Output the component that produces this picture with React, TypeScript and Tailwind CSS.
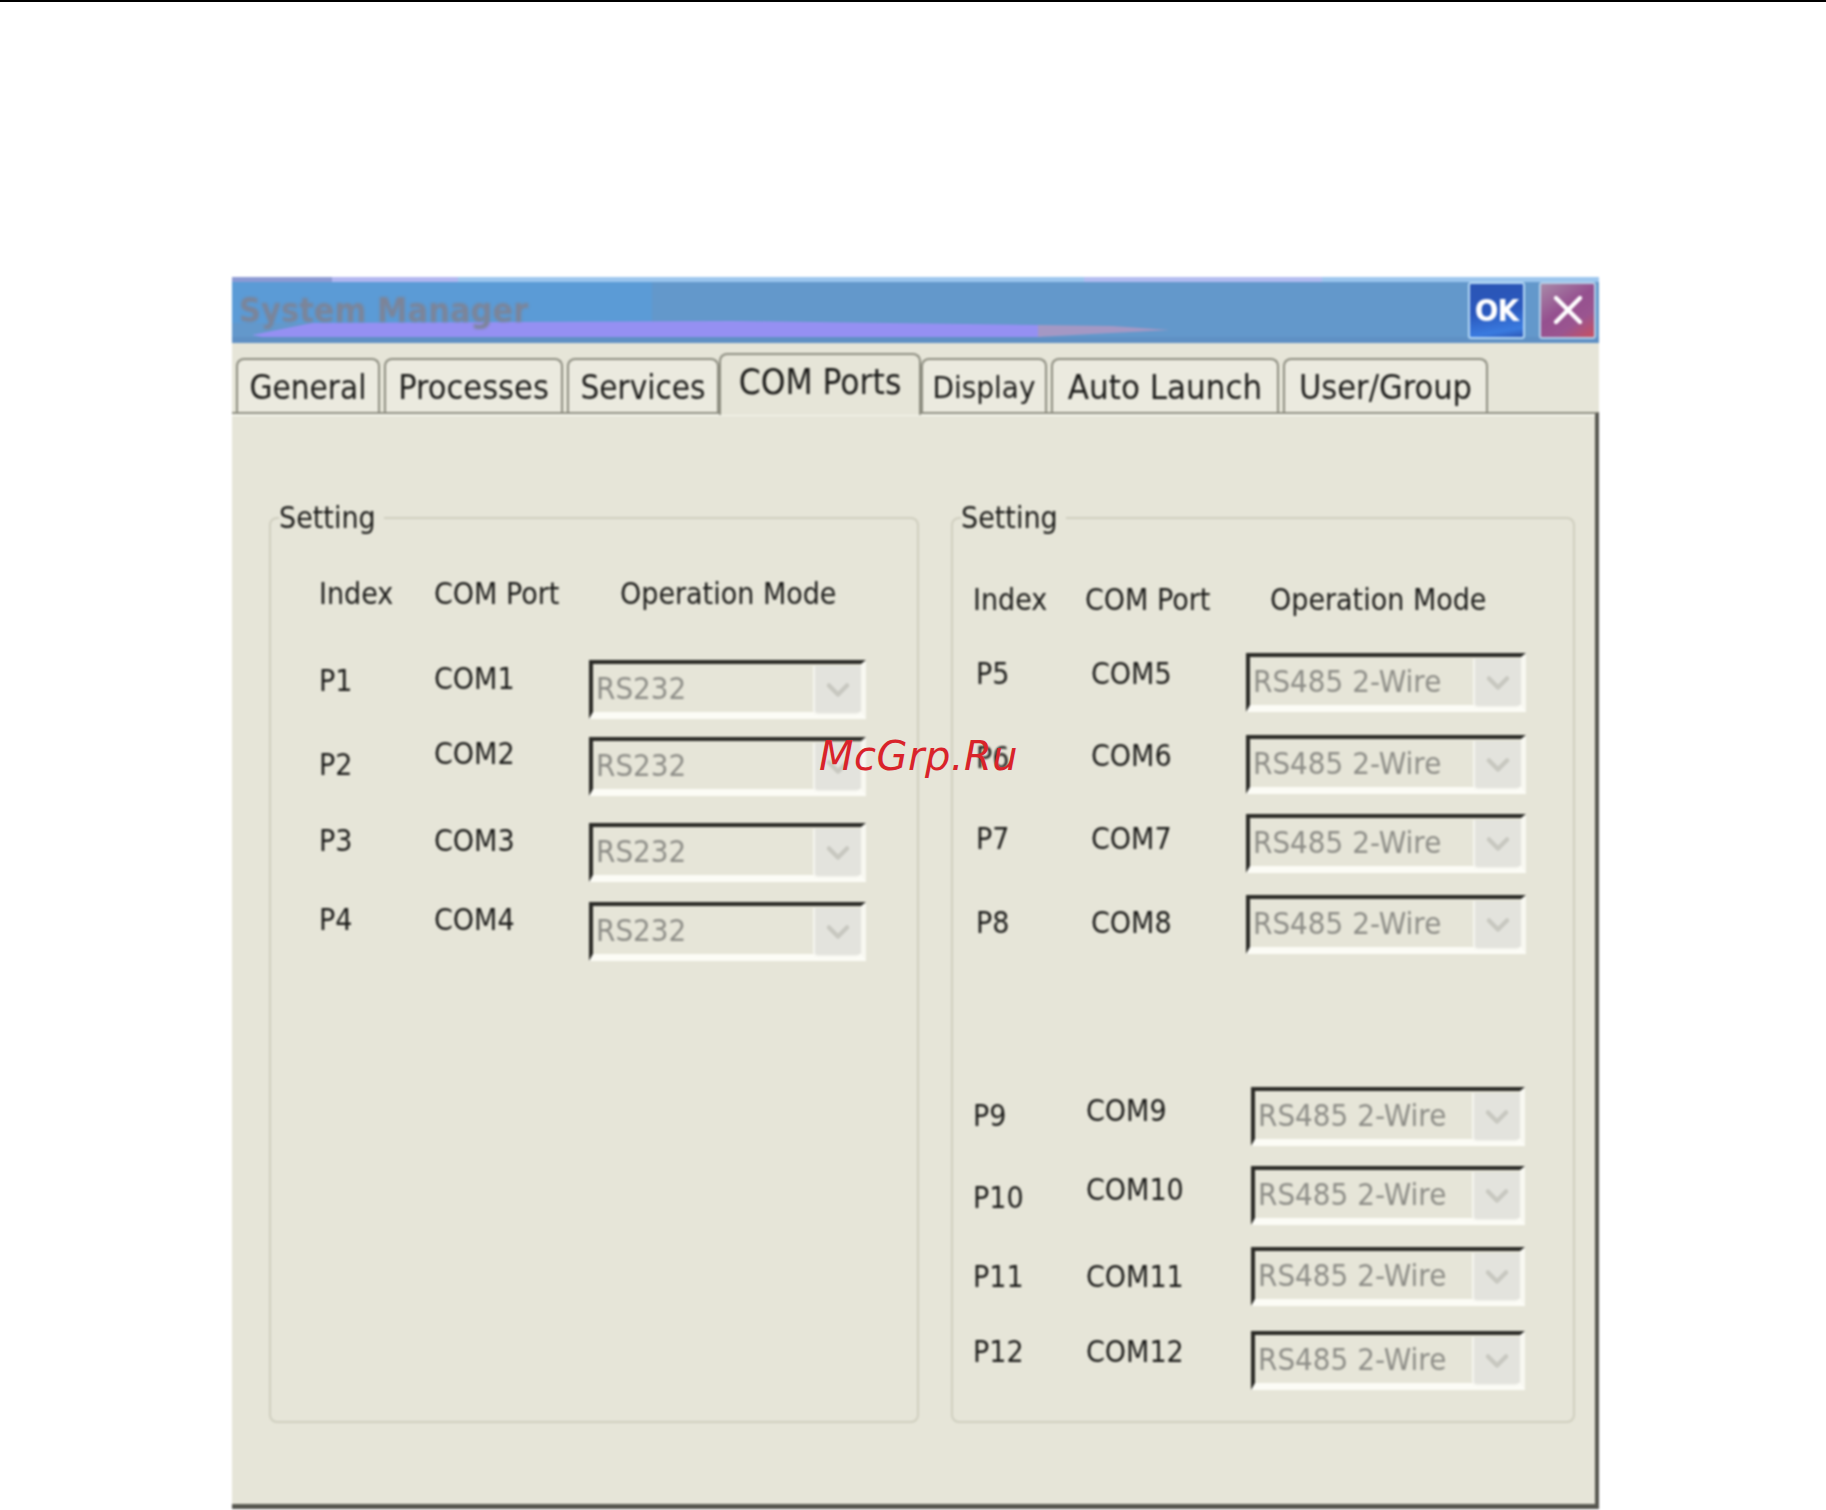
import { ChevronDown, X } from 'lucide-react'

const font = "[font-family:'DejaVu_Sans',sans-serif] [font-stretch:condensed]"

const tabs = [
  { label: 'General', box: 'mr-[4px] w-[144px] text-[33px]', active: false },
  { label: 'Processes', box: 'mr-[4px] w-[179px] text-[34px]', active: false },
  { label: 'Services', box: 'w-[152px] text-[33px]', active: false },
  { label: 'COM Ports', box: 'w-[202px] text-[35px]', active: true },
  { label: 'Display', box: 'mr-[4px] w-[126px] text-[31px]', active: false },
  { label: 'Auto Launch', box: 'mr-[4px] w-[228px] text-[34.5px]', active: false },
  { label: 'User/Group', box: 'w-[205px] text-[34px]', active: false },
]

type Port = {
  index: string
  com: string
  mode: string
  row: string
  indexPad: string
  comPad: string
}

const leftCols = 'ml-[48px] grid-cols-[115px_155px_277px]'
const rightCols = 'ml-[23px] grid-cols-[115px_155px_280px]'
const lowerCols = 'ml-[20px] grid-cols-[113px_165px_274px]'

const leftPorts: Port[] = [
  { index: 'P1', com: 'COM1', mode: 'RS232', row: `mt-[50px] ${leftCols}`, indexPad: 'pt-[4px]', comPad: 'pt-[2px]' },
  { index: 'P2', com: 'COM2', mode: 'RS232', row: `mt-[18px] ${leftCols}`, indexPad: 'pt-[11px]', comPad: 'pt-0' },
  { index: 'P3', com: 'COM3', mode: 'RS232', row: `mt-[27px] ${leftCols}`, indexPad: 'pt-px', comPad: 'pt-px' },
  { index: 'P4', com: 'COM4', mode: 'RS232', row: `mt-[20px] ${leftCols}`, indexPad: 'pt-px', comPad: 'pt-px' },
]

const rightPorts: Port[] = [
  { index: 'P5', com: 'COM5', mode: 'RS485 2-Wire', row: `mt-[37px] ${rightCols}`, indexPad: 'pt-[4px]', comPad: 'pt-[4px]' },
  { index: 'P6', com: 'COM6', mode: 'RS485 2-Wire', row: `mt-[23px] ${rightCols}`, indexPad: 'pt-[6px]', comPad: 'pt-[4px]' },
  { index: 'P7', com: 'COM7', mode: 'RS485 2-Wire', row: `mt-[20px] ${rightCols}`, indexPad: 'pt-[8px]', comPad: 'pt-[8px]' },
  { index: 'P8', com: 'COM8', mode: 'RS485 2-Wire', row: `mt-[22px] ${rightCols}`, indexPad: 'pt-[11px]', comPad: 'pt-[11px]' },
  { index: 'P9', com: 'COM9', mode: 'RS485 2-Wire', row: `mt-[133px] ${lowerCols}`, indexPad: 'pt-[12px]', comPad: 'pt-[7px]' },
  { index: 'P10', com: 'COM10', mode: 'RS485 2-Wire', row: `mt-[20px] ${lowerCols}`, indexPad: 'pt-[15px]', comPad: 'pt-[7px]' },
  { index: 'P11', com: 'COM11', mode: 'RS485 2-Wire', row: `mt-[22px] ${lowerCols}`, indexPad: 'pt-[13px]', comPad: 'pt-[13px]' },
  { index: 'P12', com: 'COM12', mode: 'RS485 2-Wire', row: `mt-[25px] ${lowerCols}`, indexPad: 'pt-[4px]', comPad: 'pt-[4px]' },
]

function ModeSelect({ mode }: { mode: string }) {
  return (
    <div className="flex h-[59px] items-stretch justify-between border-t-[4px] border-l-[4px] border-b-[7px] border-r-[5px] border-t-[#2a2a26] border-l-[#2a2a26] border-b-[#fcfcf6] border-r-[#f8f8f1] bg-[#e6e5d8] pl-[3px]">
      <span className="text-[31px] leading-[48px] text-[#8e8e88]">{mode}</span>
      <span className="mb-[-3px] mt-[2px] flex w-[48px] items-center justify-center rounded-b-[5px] border-b-2 border-l-2 border-[#f6f6f0] bg-[#e3e3dd]">
        <ChevronDown className="h-[36px] w-[36px] text-[#c8c8c0]" strokeWidth={3} />
      </span>
    </div>
  )
}

function PortRow({ port }: { port: Port }) {
  return (
    <div className={`grid ${port.row}`}>
      <div className={`${port.indexPad} text-[30px] leading-[34px] text-[#1c1c1a]`}>{port.index}</div>
      <div className={`${port.comPad} text-[30px] leading-[34px] text-[#1c1c1a]`}>{port.com}</div>
      <ModeSelect mode={port.mode} />
    </div>
  )
}

function SettingGroup({ className, headerClass, ports }: { className: string; headerClass: string; ports: Port[] }) {
  return (
    <fieldset className={`h-[921px] rounded-[8px] border-2 border-[#cfcebf] ${className}`}>
      <legend className="ml-[8px] pr-[8px] text-[30px] leading-[32px] text-[#1c1c1a]">Setting</legend>
      <div className={`grid text-[30px] leading-[32px] text-[#1c1c1a] ${headerClass}`}>
        <span>Index</span>
        <span>COM Port</span>
        <span>Operation Mode</span>
      </div>
      {ports.map((port) => (
        <PortRow key={port.index} port={port} />
      ))}
    </fieldset>
  )
}

export default function App() {
  return (
    <div className={`relative h-[1510px] w-[1826px] overflow-hidden border-t-2 border-black bg-white ${font}`}>
      <div className="ml-[232px] mt-[275px] w-[1367px] blur-[0.8px]">
        {/* Title bar */}
        <div className="relative flex h-[66px] items-center justify-between overflow-hidden bg-[#6398cb] pl-[7px] pr-[3px]">
          <svg className="absolute inset-0 h-full w-full" viewBox="0 0 1367 66" preserveAspectRatio="none">
            <rect x="0" y="5" width="420" height="41" fill="#5b9bd6" />
            <rect x="0" y="0" width="1367" height="5" fill="#9cc6ee" />
            <rect x="0" y="0" width="100" height="5" fill="#8c9ad4" />
            <rect x="100" y="0" width="126" height="5" fill="#b2b6f0" />
            <rect x="852" y="0" width="238" height="5" fill="#b3bcf0" />
            <polygon points="20,58 80,46 500,44 806,48 810,60 30,60" fill="#9590f2" />
            <polygon points="806,48 880,49 938,53 860,57 806,60" fill="#a498c4" />
            <rect x="0" y="60" width="1367" height="6" fill="#5f90c4" />
          </svg>
          <span className="relative text-[34px] font-bold leading-none text-[#7c8498] blur-[1.2px]">System Manager</span>
          <div className="relative flex gap-[14px]">
            <button className="flex h-[57px] w-[57px] items-center justify-center rounded-[3px] border-2 border-[#b5d8f5] bg-[linear-gradient(170deg,#2a55b5,#2a58bd_50%,#3a7be0_85%,#2a55b5)] text-[31px] font-bold leading-none tracking-[-1px] text-white">
              OK
            </button>
            <button className="flex h-[57px] w-[57px] items-center justify-center rounded-[3px] border-2 border-[#b5cfe8] bg-[linear-gradient(145deg,#a88aa8,#95508f_45%,#9a5590_70%,#c85060)] text-white">
              <X className="h-[48px] w-[48px]" strokeWidth={2.2} />
            </button>
          </div>
        </div>

        {/* Tab strip */}
        <div className="flex h-[69px] items-end bg-[#e6e5d8] pl-[4px]">
          {tabs.map((tab) =>
            tab.active ? (
              <div
                key={tab.label}
                className={`${tab.box} z-10 -mb-[3px] h-[62px] rounded-t-[8px] border-x-2 border-t-2 border-x-[#8d8d80] border-t-[#8d8d80] bg-[#e6e5d8] pt-[5px] text-center leading-[44px] text-[#1c1c1a]`}
              >
                {tab.label}
              </div>
            ) : (
              <div
                key={tab.label}
                className={`${tab.box} h-[54px] whitespace-nowrap rounded-t-[8px] border-x-2 border-t-2 border-[#8d8d80] bg-[#ebeadf] text-center leading-[55px] text-[#1c1c1a]`}
              >
                {tab.label}
              </div>
            ),
          )}
        </div>

        {/* Page body */}
        <div className="flex h-[1097px] gap-[32px] border-t-[2px] border-r-[4px] border-b-[5px] border-t-[#8d8d80] border-r-[#56564f] border-b-[#56564f] bg-[#e6e5d8] pl-[37px] pt-[88px] shadow-[inset_0_2px_0_#f6f6ee]">
          <SettingGroup
            className="w-[650px]"
            headerClass="ml-[48px] mt-[44px] grid-cols-[115px_186px_auto]"
            ports={leftPorts}
          />
          <SettingGroup
            className="w-[624px]"
            headerClass="ml-[20px] mt-[50px] grid-cols-[112px_185px_auto]"
            ports={rightPorts}
          />
        </div>
      </div>

      <span className="absolute left-[819px] top-[733px] text-[40px] italic leading-[42px] tracking-[0.5px] text-[#d9232a] [font-family:'DejaVu_Sans',sans-serif] [font-stretch:normal]">
        McGrp.Ru
      </span>
    </div>
  )
}
